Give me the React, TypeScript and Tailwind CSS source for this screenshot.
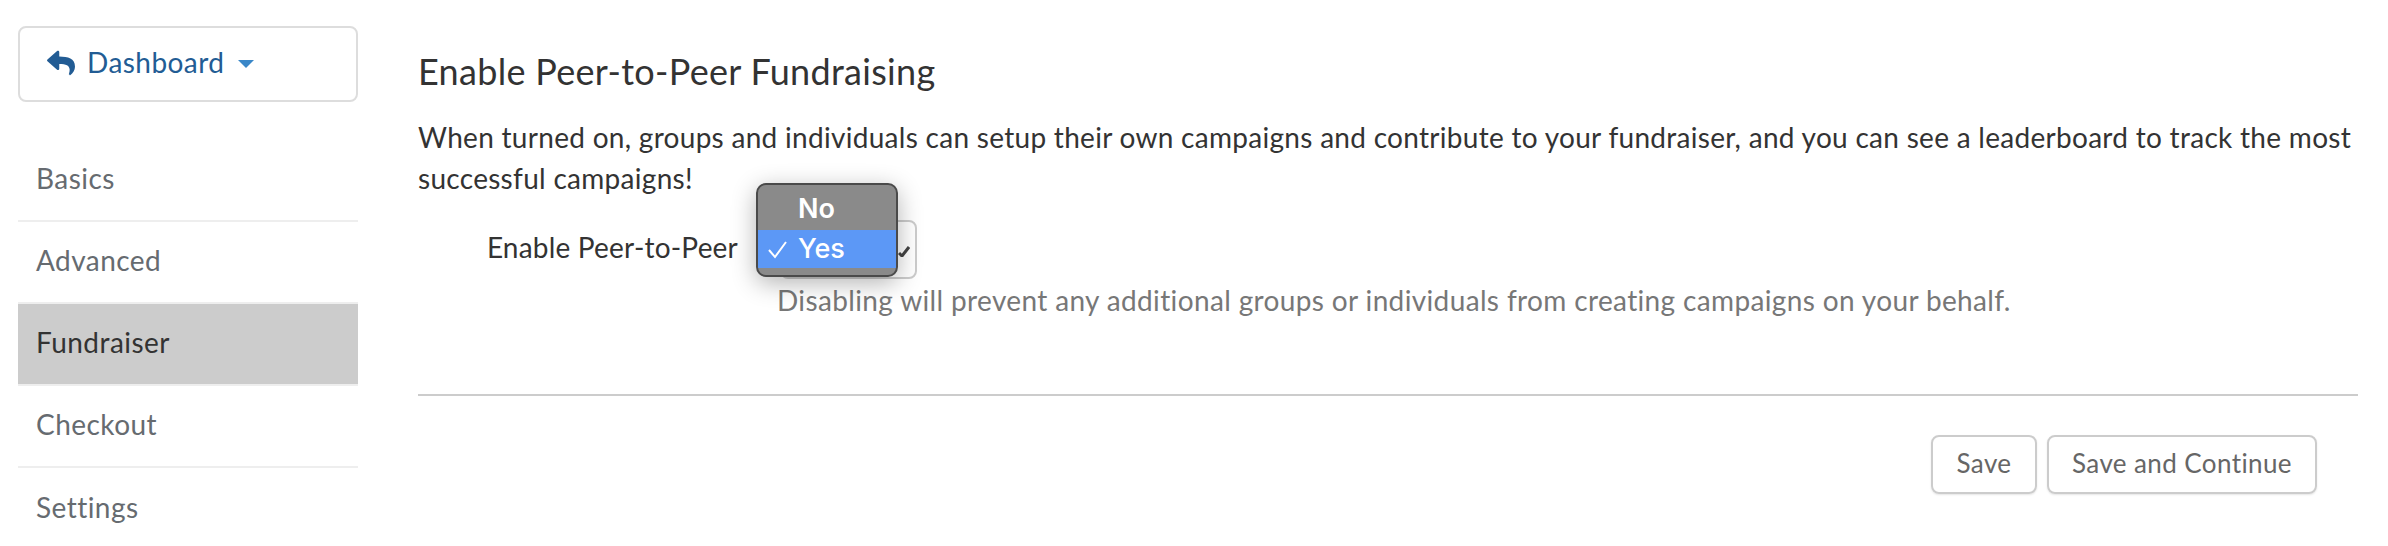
import { FaReply } from "react-icons/fa";

const items = ["Basics", "Advanced", "Fundraiser", "Checkout", "Settings"];

export default function App() {
  return (
    <div className="flex h-[546px] w-[2388px] overflow-hidden bg-white font-['Lato',sans-serif] text-[28px] text-[#333]">
      <aside className="ml-[18px] mt-[26px] w-[340px] shrink-0">
        <button className="flex h-[76px] w-full items-center rounded-lg border-2 border-[#ddd] pl-[27px] text-[#225c94]">
          <FaReply className="h-[28px] w-[28px] -translate-y-[1px]" />
          <span className="ml-[12px] pb-[5px] text-[28px] tracking-[0.45px]">Dashboard</span>
          <span className="ml-[14px] h-0 w-0 border-x-[8px] border-t-[8px] border-x-transparent border-t-[#3a87c8]" />
        </button>
        <nav className="mt-[38px]">
          {items.map((t) => (
            <div
              key={t}
              className={
                t === "Fundraiser"
                  ? "flex h-[82px] items-center border-b-2 border-[#eee] bg-[#ccc] pb-[5px] pl-[18px] tracking-[0.45px] text-[#333]"
                  : "flex h-[82px] items-center border-b-2 border-[#eee] pb-[5px] pl-[18px] tracking-[0.45px] text-[#666b70] last:border-b-0"
              }
            >
              {t}
            </div>
          ))}
        </nav>
      </aside>

      <main className="ml-[60px] w-[1940px] shrink-0 pt-[46px]">
        <h2 className="text-[36px] leading-[50px] tracking-[0.3px] text-[#333]">Enable Peer-to-Peer Fundraising</h2>
        <p className="mt-[21px] leading-[41px] tracking-[0.29px] text-[#333]">
          When turned on, groups and individuals can setup their own campaigns and contribute to your fundraiser, and you can see a leaderboard to track the most successful campaigns!
        </p>
        <div className="mt-[21px] flex">
          <label className="mr-[40px] flex h-[59px] w-[320px] items-center justify-end pb-[5px] tracking-[0.2px] text-[#333]">
            Enable Peer-to-Peer
          </label>
          <div>
            <div className="relative ml-[2px] h-[59px] w-[137px] rounded-lg border-2 border-[#ccc]">
              <svg className="absolute right-[5px] top-[23px] h-[12px] w-[12px]" viewBox="0 0 12 12">
                <path d="M1 8 L4 11 L11 2" fill="none" stroke="#444" strokeWidth="3" />
              </svg>
              <div className="absolute left-[-26px] top-[-39px] w-[142px] overflow-hidden rounded-[10px] border-2 border-[#4a4a4a] bg-[#8a8a8a] pb-[7px] pt-[4px] font-['Inter',sans-serif] text-[27px] font-semibold text-white shadow-[0_6px_24px_rgba(0,0,0,0.3)]">
                <div className="flex h-[41px] items-center pl-[40px]">No</div>
                <div className="relative flex h-[38px] items-center bg-[#5c98f6] pl-[40px] font-medium">
                  <svg className="absolute left-[10px] top-[9px] h-[22px] w-[20px]" viewBox="0 0 20 22">
                    <path d="M1 11 L7 18 L18 3" fill="none" stroke="#fff" strokeWidth="2" />
                  </svg>
                  Yes
                </div>
              </div>
            </div>
            <p className="-ml-[1px] mt-[1px] whitespace-nowrap leading-[41px] tracking-[0.36px] text-[#777]">
              Disabling will prevent any additional groups or individuals from creating campaigns on your behalf.
            </p>
          </div>
        </div>
        <hr className="mt-[73px] border-t-2 border-[#ccc]" />
        <div className="mt-[39px] flex justify-end gap-[10px] pr-[41px]">
          <button className="h-[59px] w-[106px] rounded-lg border-2 border-[#ccc] pb-[3px] text-[26px] tracking-[0.4px] text-[#666] shadow-[0_1px_2px_rgba(0,0,0,0.1)]">Save</button>
          <button className="h-[59px] w-[270px] rounded-lg border-2 border-[#ccc] pb-[3px] text-[26px] tracking-[0.4px] text-[#666] shadow-[0_1px_2px_rgba(0,0,0,0.1)]">Save and Continue</button>
        </div>
      </main>
    </div>
  );
}
